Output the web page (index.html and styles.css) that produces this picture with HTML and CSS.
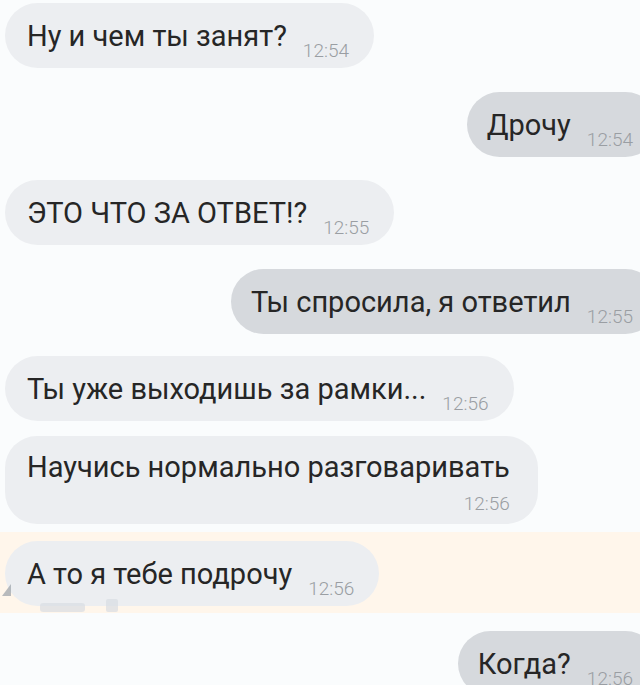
FILE: index.html
```html
<!DOCTYPE html>
<html lang="ru">
<head>
  <meta charset="UTF-8" />
  <meta name="viewport" content="width=device-width, initial-scale=1.0" />
  <title>Чат</title>
  <link rel="stylesheet" href="styles.css">
</head>
<body>

<div class="chat">
  <div class="row in first">
    <div class="bubble"><span class="text">Ну и чем ты занят?</span><span class="time">12:54</span></div>
  </div>
  <div class="row out">
    <div class="bubble"><span class="text">Дрочу</span><span class="time">12:54</span></div>
  </div>
  <div class="row in">
    <div class="bubble"><span class="text">ЭТО ЧТО ЗА ОТВЕТ!?</span><span class="time">12:55</span></div>
  </div>
  <div class="row out">
    <div class="bubble"><span class="text">Ты спросила, я ответил</span><span class="time">12:55</span></div>
  </div>
  <div class="row in">
    <div class="bubble"><span class="text">Ты уже выходишь за рамки...</span><span class="time">12:56</span></div>
  </div>
  <div class="row in tight">
    <div class="bubble wrap"><span class="text">Научись нормально разговаривать</span><span class="time">12:56</span></div>
  </div>
  <div class="row in marked">
    <div class="bubble"><span class="text">А то я тебе подрочу</span><span class="time">12:56</span></div>
    <div class="smudge s1"></div>
    <div class="smudge s2"></div>
    <div class="smudge s3"></div>
  </div>
  <div class="row out">
    <div class="bubble"><span class="text">Когда?</span><span class="time">12:56</span></div>
  </div>
</div>

</body>
</html>
```

FILE: styles.css
```css
body {
  margin: 0;
  font-family: Roboto, 'Liberation Sans', sans-serif;
  background: #fafcfd;
  color: #262626;
  overflow: hidden;
}
.chat {
  display: flex;
  flex-direction: column;
  padding-top: 3px;
}
.row {
  display: flex;
  padding-left: 5px;
  margin-top: 22.5px;
}
.row.first {
  margin-top: 0;
}
.row.tight {
  margin-top: 15px;
}
.row.out {
  justify-content: flex-end;
  margin-top: 24px;
  margin-right: -18px;
}
.bubble {
  display: flex;
  align-items: baseline;
  background: #eceef1;
  border-radius: 33px;
  padding: 16px 25px 15px 22px;
  white-space: nowrap;
}
.row.out .bubble {
  background: #d6d9dd;
  padding-left: 20px;
}
.text {
  font-size: 29px;
  line-height: 34px;
}
.time {
  font-size: 19px;
  line-height: 24px;
  font-weight: 300;
  color: #9a9ea3;
  margin-left: 16px;
  position: relative;
  top: 11px;
}
.bubble.wrap {
  display: block;
  padding: 14px 28px 8px 22px;
  border-radius: 32px;
}
.bubble.wrap .text {
  display: block;
}
.bubble.wrap .time {
  display: block;
  text-align: right;
  top: 0;
  margin-top: 8px;
}
.row.marked {
  position: relative;
  background: #fff6eb;
  padding-top: 9px;
  padding-bottom: 7px;
  margin-top: 8px;
}
.row.marked + .row {
  margin-top: 18px;
}
.smudge {
  position: absolute;
  background: #d9dde2;
  opacity: 0.7;
}
.s1 {
  left: 2px;
  top: 52px;
  width: 9px;
  height: 12px;
  background: #9aa1a8;
  clip-path: polygon(100% 0, 100% 100%, 0 100%);
}
.s2 {
  left: 40px;
  top: 71px;
  width: 45px;
  height: 9px;
  border-radius: 3px;
}
.s3 {
  left: 106px;
  top: 67px;
  width: 12px;
  height: 13px;
  border-radius: 2px;
}
```
